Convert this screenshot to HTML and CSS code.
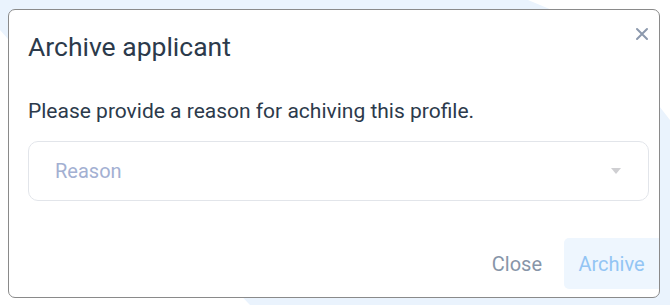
FILE: index.html
```html
<!DOCTYPE html>
<html lang="en">
<head>
<meta charset="utf-8">
<title>Archive applicant</title>
<link rel="stylesheet" href="styles.css">
</head>
<body>
<div class="backdrop-shape" aria-hidden="true"></div>
<div class="dialog" role="dialog" aria-labelledby="dlg-title">
  <header class="dialog-header">
    <h1 class="dialog-title" id="dlg-title">Archive applicant</h1>
    <button class="close-x" aria-label="Close">
      <svg width="14" height="14" viewBox="0 0 14 14"><path d="M2 2 L12 12 M12 2 L2 12" stroke="#8c99ad" stroke-width="2" stroke-linecap="round"/></svg>
    </button>
  </header>
  <div class="dialog-body">
    <p class="prompt">Please provide a reason for achiving this profile.</p>
    <div class="select">
      <span class="placeholder">Reason</span>
      <span class="caret"></span>
    </div>
  </div>
  <footer class="dialog-footer">
    <button class="btn btn-text">Close</button>
    <button class="btn btn-primary">Archive</button>
  </footer>
</div>
</body>
</html>
```
FILE: styles.css
```css
html, body {
  margin: 0;
  padding: 0;
}
body {
  width: 670px;
  height: 305px;
  background: #ffffff;
  position: relative;
  overflow: hidden;
  font-family: Roboto, "Liberation Sans", sans-serif;
}
.backdrop-shape {
  position: absolute;
  inset: 0;
  background: #eaf3fd;
  clip-path: polygon(0 0, 528px 0, 600px 30px, 670px 120px, 670px 305px, 250px 305px, 150px 200px, 0 30px);
  z-index: 0;
}
.dialog {
  position: relative;
  z-index: 1;
  margin: 9px 0 0 8px;
  width: 650px;
  height: 287px;
  background: #ffffff;
  border: 1px solid #8a8a8a;
  border-radius: 7px;
  display: flex;
  flex-direction: column;
  box-sizing: content-box;
  overflow: hidden;
}
.dialog-header {
  display: flex;
  justify-content: space-between;
  align-items: flex-start;
  padding: 17px 10px 0 19px;
}
.dialog-title {
  margin: 0;
  font-size: 26.5px;
  font-weight: 400;
  line-height: 40px;
  color: #2c3a4b;
}
.close-x {
  border: 0;
  background: none;
  padding: 0;
  margin-top: 0;
  width: 14px;
  height: 14px;
  display: flex;
}
.dialog-body {
  padding: 0 10px 0 19px;
}
.prompt {
  margin: 30px 0 0;
  font-size: 21px;
  line-height: 28px;
  color: #2c3a4b;
}
.select {
  margin-top: 16px;
  height: 58px;
  border: 1px solid #e2e5ea;
  border-radius: 10px;
  display: flex;
  align-items: center;
  justify-content: space-between;
  padding: 0 27px 0 26px;
}
.placeholder {
  font-size: 20px;
  color: #a3b0d2;
}
.caret {
  width: 0;
  height: 0;
  border-left: 5px solid transparent;
  border-right: 5px solid transparent;
  border-top: 6px solid #cfcfd2;
}
.dialog-footer {
  margin-top: auto;
  display: flex;
  justify-content: flex-end;
  align-items: center;
  padding: 0 0 8px 0;
}
.btn {
  font-family: Roboto, "Liberation Sans", sans-serif;
  font-size: 20px;
  border: 0;
  background: none;
  height: 51px;
  cursor: pointer;
}
.btn-text {
  color: #8795a8;
  padding: 0 22px;
}
.btn-primary {
  background: #eef6fe;
  color: #93c5f4;
  border-radius: 5px 0 0 5px;
  width: 95px;
  padding: 0;
}
```
